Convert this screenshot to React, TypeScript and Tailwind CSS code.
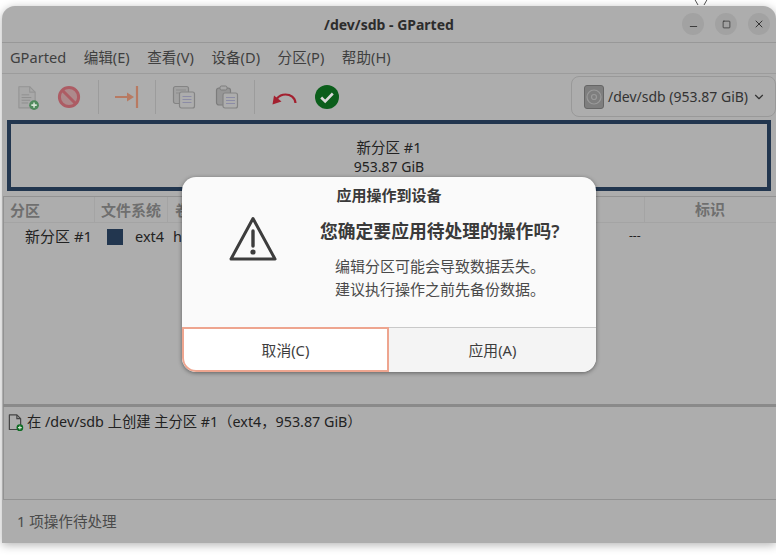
import { ChevronDown, Minus, Square, X } from 'lucide-react';

const FONT = "font-['Noto_Sans','Noto_Sans_CJK_SC',sans-serif]";

function NewIcon({ small }: { small?: boolean }) {
  return (
    <svg viewBox="0 0 24 24" className={small ? 'h-[18px] w-[18px]' : 'h-[26px] w-[26px]'}>
      <path d="M4.500 2.500h10l5 5v14.500h-15z" fill={small ? 'none' : '#a8a8a8'} stroke={small ? '#444' : '#949494'} strokeWidth={small ? 1.6 : 1} strokeLinejoin="round" />
      <path d="M14.500 2.500v5h5" fill="none" stroke={small ? '#444' : '#949494'} strokeWidth={small ? 1.6 : 1} />
      {!small && <path d="M7 10h7M7 12.500h9M7 15h8M7 17.500h6" stroke="#8f8f8f" strokeWidth="0.9" />}
      <circle cx="18.500" cy="19.500" r="4.500" fill={small ? '#0d6b22' : '#4f8a5c'} />
      <path d="M16 19.500h5M18.500 17v5" stroke="#d8e6d8" strokeWidth="1.400" />
    </svg>
  );
}

function StopIcon() {
  return (
    <svg viewBox="0 0 24 24" className="h-[24px] w-[24px]">
      <circle cx="12" cy="12" r="9.600" fill="#ad8a8c" stroke="#ad5c64" strokeWidth="3" />
      <path d="M5.500 5.500l13 13" stroke="#ad5c64" strokeWidth="3" />
    </svg>
  );
}

function ArrowEndIcon() {
  return (
    <svg viewBox="0 0 26 24" className="h-[24px] w-[26px]">
      <path d="M1 12h16" stroke="#b87a62" strokeWidth="2" />
      <path d="M13 7.500l7 4.500-7 4.500z" fill="#b87a62" />
      <path d="M23 1v22" stroke="#b87a62" strokeWidth="2.200" />
    </svg>
  );
}

function CopyIcon() {
  return (
    <svg viewBox="0 0 24 24" className="h-[24px] w-[24px]">
      <rect x="1.500" y="1.500" width="15" height="17" rx="2" fill="#a2a2a2" stroke="#848484" strokeWidth="1.200" />
      <path d="M4 5h10M4 8h10" stroke="#8c8c8c" />
      <rect x="7.500" y="7" width="15" height="16" rx="2" fill="#adadad" stroke="#848484" strokeWidth="1.200" />
      <path d="M10.500 11.500h9M10.500 14.500h9M10.500 17.500h9" stroke="#8c8ca6" />
    </svg>
  );
}

function PasteIcon() {
  return (
    <svg viewBox="0 0 24 24" className="h-[24px] w-[24px]">
      <rect x="1.500" y="3" width="14" height="17" rx="2.500" fill="#969696" stroke="#7c7c7c" strokeWidth="1.200" />
      <rect x="5" y="1" width="7" height="4" rx="1.500" fill="#a8a8a8" stroke="#7c7c7c" />
      <rect x="8" y="8" width="14.500" height="15" rx="2" fill="#adadad" stroke="#848484" strokeWidth="1.200" />
      <path d="M11 12.500h9M11 15.500h9M11 18.500h9" stroke="#8c8ca6" />
    </svg>
  );
}

function UndoIcon() {
  return (
    <svg viewBox="0 0 26 24" className="h-[24px] w-[26px]">
      <path d="M24.500 18c-.5-5.500-5-8.500-10-8.500-3.500 0-6.500 1.500-8.500 4" fill="none" stroke="#a3202f" strokeWidth="2.200" />
      <path d="M1.500 19.500l1.500-9 7.500 6z" fill="#a3202f" />
    </svg>
  );
}

function ApplyIcon() {
  return (
    <svg viewBox="0 0 24 24" className="h-[24px] w-[24px]">
      <circle cx="12" cy="12" r="12" fill="#0b5e1b" />
      <path d="M6.200 12.500l4 4 7.600-8" fill="none" stroke="#d9d9d9" strokeWidth="2.600" />
    </svg>
  );
}

function DiskIcon() {
  return (
    <svg viewBox="0 0 20 24" className="h-[24px] w-[20px]">
      <rect x="0.500" y="0.500" width="19" height="23" rx="2.500" fill="#7e7e7e" stroke="#666" />
      <circle cx="10" cy="12" r="7" fill="none" stroke="#9a9a9a" strokeWidth="1.200" />
      <circle cx="10" cy="12" r="2.500" fill="none" stroke="#9a9a9a" strokeWidth="1.200" />
    </svg>
  );
}

function WarningIcon() {
  return (
    <svg viewBox="0 0 48 46" className="h-[46px] w-[48px]">
      <path d="M24 2.500L46 43H2z" fill="none" stroke="#3d3d3d" strokeWidth="3" strokeLinejoin="round" />
      <path d="M24 15v15" stroke="#3d3d3d" strokeWidth="3.400" strokeLinecap="round" />
      <circle cx="24" cy="36" r="2.600" fill="#3d3d3d" />
    </svg>
  );
}

function ToolSep() {
  return <div className="mx-[15px] h-[34px] w-px bg-[#9c9c9c]" />;
}

function Dialog() {
  return (
    <div className="absolute left-[180px] top-[171px] flex h-[195px] w-[414px] flex-col overflow-hidden rounded-[14px] bg-[#fafafa] shadow-[0_1px_4px_rgba(0,0,0,.45)]">
      <div className="flex h-[38px] items-center justify-center pb-[2px] text-[15px] font-semibold text-[#3a3a3a]">应用操作到设备</div>
      <div className="flex flex-1">
        <div className="flex w-[138px] justify-center pl-[3px] pt-[1px]">
          <WarningIcon />
        </div>
        <div className="flex flex-1 flex-col">
          <div className="text-[17.8px] font-semibold leading-[32px] text-[#3a3a3a]">您确定要应用待处理的操作吗?</div>
          <div className="ml-[15px] mt-[8px] text-[15px] leading-[23px] text-[#4a4a4a]">
            <div>编辑分区可能会导致数据丢失。</div>
            <div>建议执行操作之前先备份数据。</div>
          </div>
        </div>
      </div>
      <div className="flex h-[45px] border-t border-[#c9c9c9] text-[14.8px] text-[#3d3d3d]">
        <button className="-mt-px w-[207px] rounded-bl-[14px] border-2 border-[#eea58f] bg-white pt-px">取消(C)</button>
        <button className="flex-1 bg-[#f4f4f4] pt-px">应用(A)</button>
      </div>
    </div>
  );
}

export default function App() {
  return (
    <div className={`${FONT} relative h-[555px] w-[776px] overflow-hidden bg-white`}>
      <div className="absolute left-[693px] top-[-3px]">
        <svg width="16" height="9" viewBox="0 0 16 9"><path d="M1 1l4 7M15 1l-4 7" fill="none" stroke="#555" /></svg>
      </div>
      <div className="relative ml-[2px] mt-[6px] flex h-[537px] w-[774px] flex-col rounded-t-[13px] bg-[#adadad] text-[14.5px] text-[#222] shadow-[0_2px_10px_rgba(0,0,0,.3)]">
        <div className="relative flex h-[37px] flex-none items-center justify-center border-b border-[#989898]">
          <span className="text-[14px] font-bold text-[#2c2c2c]">/dev/sdb - GParted</span>
          <div className="absolute right-[6px] top-[7px] flex gap-[11px]">
            <div className="flex h-[22px] w-[22px] items-center justify-center rounded-full bg-[#a2a2a2]"><Minus size={11} className="mt-[5px] text-[#333]" /></div>
            <div className="flex h-[22px] w-[22px] items-center justify-center rounded-full bg-[#a2a2a2]"><Square size={9} className="text-[#333]" /></div>
            <div className="flex h-[22px] w-[22px] items-center justify-center rounded-full bg-[#a2a2a2]"><X size={12} className="text-[#333]" /></div>
          </div>
        </div>
        <div className="flex h-[31px] flex-none items-center gap-[17.5px] border-b border-[#9c9c9c] pl-[8px] text-[14.6px] text-[#3f3f3f]">
          <span>GParted</span>
          <span>编辑(E)</span>
          <span>查看(V)</span>
          <span>设备(D)</span>
          <span>分区(P)</span>
          <span>帮助(H)</span>
        </div>
        <div className="flex h-[45px] flex-none items-center pl-[12px]">
          <NewIcon />
          <div className="ml-[17px]"><StopIcon /></div>
          <div className="ml-[2px]"><ToolSep /></div>
          <ArrowEndIcon />
          <ToolSep />
          <div className="ml-[1px]"><CopyIcon /></div>
          <div className="ml-[19px]"><PasteIcon /></div>
          <ToolSep />
          <div className="ml-[1px]"><UndoIcon /></div>
          <div className="ml-[18px]"><ApplyIcon /></div>
          <div className="ml-auto flex h-[41px] w-[205px] items-center gap-[4px] rounded-[8px] border border-[#999] pl-[12px] text-[14px] text-[#333]">
            <DiskIcon />
            <span>/dev/sdb (953.87 GiB)</span>
            <ChevronDown size={14} />
          </div>
        </div>
        <div className="mx-[5px] mt-px flex h-[71px] flex-none flex-col items-center justify-center border-[4px] border-[#22364f] pt-[2px] text-[14.5px] leading-[20px] text-[#222]">
          <span>新分区 #1</span>
          <span className="text-[14px]">953.87 GiB</span>
        </div>
        <div className="ml-px mt-[5px] flex h-[208px] flex-none flex-col border-l border-t border-[#929292]">
          <div className="flex h-[26px] items-center border-b border-[#a4a4a4] text-[15px] font-bold text-[#6f6f6f]">
            <span className="h-full w-[91px] border-r border-[#a4a4a4] pl-[6px] leading-[26px]">分区</span>
            <span className="h-full w-[73px] border-r border-[#a4a4a4] pl-[6px] leading-[26px]">文件系统</span>
            <span className="h-full w-[477px] border-r border-[#a4a4a4] pl-[7px] leading-[26px]">卷标</span>
            <span className="flex-1 pl-[50px]">标识</span>
          </div>
          <div className="flex h-[27px] items-center text-[14.5px] text-[#222]">
            <span className="w-[103px] pl-[21px] text-[15px]">新分区 #1</span>
            <span className="h-[16px] w-[16px] bg-[#22364f]" />
            <span className="ml-[12px] w-[38px]">ext4</span>
            <span className="w-[456px]">he</span>
            <span className="-mt-[2px] text-[12px]">---</span>
          </div>
        </div>
        <div className="ml-px h-[3px] flex-none bg-[#8a8a8a]" />
        <div className="ml-px flex h-[93px] flex-none items-start gap-[3px] border-b border-l border-[#929292] pl-[2px] pt-[6px] text-[14.3px] leading-[18px] text-[#222]">
          <NewIcon small />
          <span>在 /dev/sdb 上创建 主分区 #1（ext4，953.87 GiB）</span>
        </div>
        <div className="flex flex-1 items-center pl-[15px] pt-px text-[14.6px] text-[#4a4a4a]">1 项操作待处理</div>
        <Dialog />
      </div>
    </div>
  );
}
